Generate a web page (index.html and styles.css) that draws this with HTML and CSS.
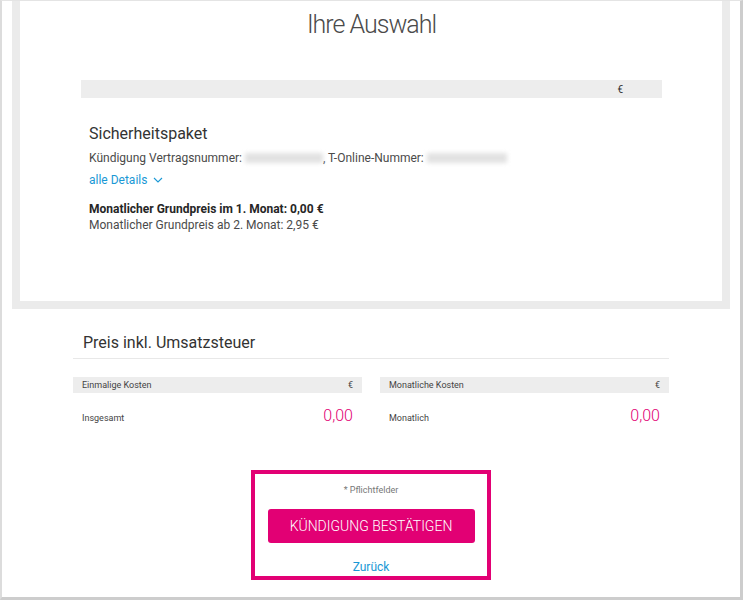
FILE: index.html
```html
<!DOCTYPE html>
<html lang="de">
<head>
    <meta charset="UTF-8">
    <title>Ihre Auswahl</title>
    <link rel="stylesheet" href="styles.css">
</head>
<body>
    <div class="page">
        <div class="summary">
            <div class="summary-card">
                <h1 class="title">Ihre Auswahl</h1>
                <div class="bar"><span class="bar-cur">€</span></div>
                <div class="product">
                    <h2 class="product-name">Sicherheitspaket</h2>
                    <p class="product-line">Kündigung Vertragsnummer: <span class="blur blur-a"></span>, T-Online-Nummer: <span class="blur blur-b"></span></p>
                    <a class="details-link" href="#">alle Details
                        <svg class="chevron" width="10" height="6" viewBox="0 0 10 6"><path d="M1 1l4 4 4-4" fill="none" stroke="#1a98d5" stroke-width="1.1"/></svg>
                    </a>
                    <p class="price-strong">Monatlicher Grundpreis im 1. Monat: 0,00 €</p>
                    <p class="price-normal">Monatlicher Grundpreis ab 2. Monat: 2,95 €</p>
                </div>
            </div>
        </div>

        <div class="costs">
            <h3 class="costs-title">Preis inkl. Umsatzsteuer</h3>
            <div class="costs-grid">
                <div class="cost-col">
                    <div class="cost-head"><span>Einmalige Kosten</span><span>€</span></div>
                    <div class="cost-row"><span class="cost-label">Insgesamt</span><span class="cost-value">0,00</span></div>
                </div>
                <div class="cost-col">
                    <div class="cost-head"><span>Monatliche Kosten</span><span>€</span></div>
                    <div class="cost-row"><span class="cost-label">Monatlich</span><span class="cost-value">0,00</span></div>
                </div>
            </div>
        </div>

        <div class="confirm-box">
            <div class="required">* Pflichtfelder</div>
            <button type="button" class="confirm-button">KÜNDIGUNG BESTÄTIGEN</button>
            <a class="back-link" href="#">Zurück</a>
        </div>
    </div>
</body>
</html>
```

FILE: styles.css
```css
body {
    margin: 0;
    font-family: 'Roboto', 'Liberation Sans', sans-serif;
    color: #333;
    background: #fff;
}
.page {
    width: 743px;
    height: 600px;
    box-sizing: border-box;
    border-top: 1px solid #e4e4e4;
    border-left: 2px solid #dcdcdc;
    border-right: 3px solid #cdcdcd;
    border-bottom: 3px solid #cdcdcd;
    overflow: hidden;
}
.summary {
    margin: 0 10px;
    padding: 0 8px 8px;
    background: #ebebeb;
}
.summary-card {
    background: #fff;
    height: 300px;
    padding: 0 60px 0 61px;
    box-sizing: border-box;
}
.title {
    margin: 0;
    padding-top: 9px;
    font-size: 25px;
    font-weight: 300;
    line-height: 30px;
    letter-spacing: -1px;
    text-align: center;
    color: #4a4a4a;
}
.bar {
    margin-top: 40px;
    height: 18px;
    background: #ededed;
    display: flex;
    align-items: center;
    justify-content: flex-end;
    padding-right: 39px;
    font-size: 10px;
    color: #333;
}
.product {
    padding: 26px 0 0 8px;
}
.product-name {
    margin: 0;
    font-size: 16px;
    font-weight: 400;
    line-height: 20px;
    color: #333;
}
.product-line {
    margin: 6px 0 0;
    font-size: 12px;
    line-height: 16px;
    color: #4a4a4a;
}
.blur {
    display: inline-block;
    height: 10px;
    vertical-align: -1px;
    background: #e2e2e2;
    filter: blur(2px);
}
.blur-a { width: 78px; }
.blur-b { width: 80px; }
.details-link {
    display: inline-flex;
    align-items: center;
    gap: 6px;
    margin-top: 6px;
    font-size: 12px;
    line-height: 16px;
    color: #1a98d5;
    text-decoration: none;
}
.price-strong {
    margin: 13px 0 0;
    font-size: 12px;
    font-weight: 700;
    line-height: 16px;
    color: #262626;
}
.price-normal {
    margin: 0;
    font-size: 12px;
    line-height: 16px;
    color: #4a4a4a;
}
.costs {
    margin: 24px 71px 0;
}
.costs-title {
    margin: 0;
    padding: 0 0 5px 10px;
    font-size: 16px;
    font-weight: 400;
    line-height: 20px;
    color: #333;
    border-bottom: 1px solid #e8e8e8;
}
.costs-grid {
    display: grid;
    grid-template-columns: 1fr 1fr;
    gap: 18px;
    margin-top: 18px;
}
.cost-head {
    display: flex;
    justify-content: space-between;
    align-items: center;
    height: 16px;
    padding: 0 9px;
    background: #ededed;
    font-size: 9px;
    color: #444;
}
.cost-row {
    display: flex;
    justify-content: space-between;
    align-items: flex-end;
    padding: 14px 9px 0;
}
.cost-label {
    font-size: 9px;
    line-height: 14px;
    color: #444;
}
.cost-value {
    font-size: 16px;
    font-weight: 300;
    line-height: 18px;
    color: #e20074;
}
.confirm-box {
    width: 240px;
    height: 110px;
    box-sizing: border-box;
    margin: 45px auto 0;
    border: 4px solid #e20074;
    display: flex;
    flex-direction: column;
    align-items: center;
    padding-top: 10px;
}
.required {
    font-size: 9px;
    line-height: 12px;
    color: #777;
}
.confirm-button {
    margin-top: 13px;
    width: 207px;
    height: 34px;
    border: none;
    border-radius: 3px;
    background: #e20074;
    color: #fff;
    font-family: 'Roboto', 'Liberation Sans', sans-serif;
    font-size: 14px;
    font-weight: 300;
    cursor: pointer;
}
.back-link {
    margin-top: 17px;
    font-size: 12px;
    color: #1a98d5;
    text-decoration: none;
}
```
